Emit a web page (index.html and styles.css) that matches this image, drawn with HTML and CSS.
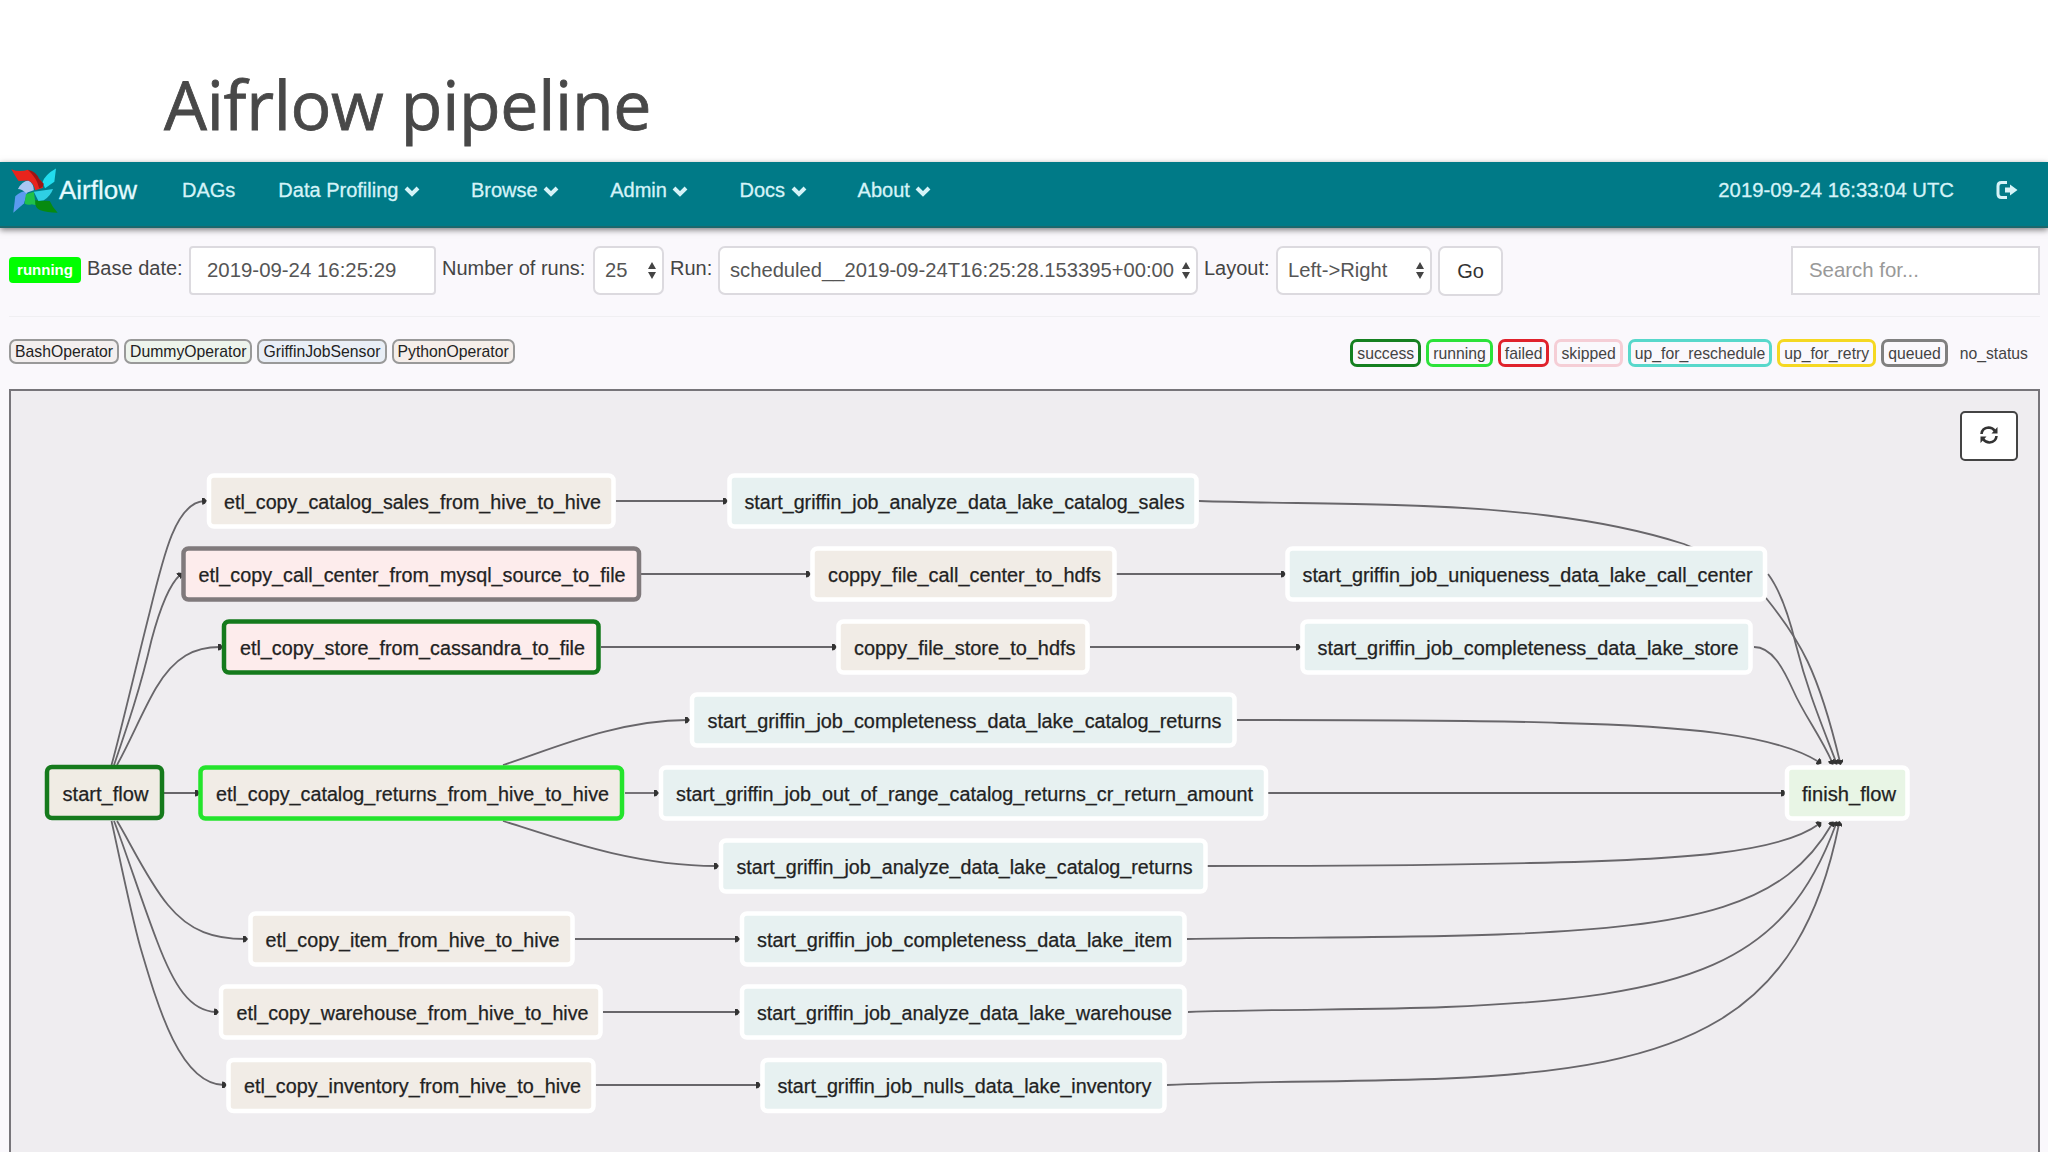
FILE: index.html
```html
<!DOCTYPE html>
<html lang="en">
<head>
    <meta charset="UTF-8">
    <title>Airflow pipeline</title>
    <link rel="stylesheet" href="styles.css">
</head>
<body>
    <h1 class="title">Aifrlow pipeline</h1>

    <nav class="navbar">
        <a class="brand">
            <svg class="logo" viewBox="18 20 145 150">
                <path fill="#5b9bf0" d="M28 158L34 108Q50 92 72 92L60 130Z"/>
                <path fill="#a9c6f2" d="M42 86Q54 62 74 60Q90 70 90 90L66 98Q54 86 42 86Z"/>
                <path fill="#1fc04a" d="M66 102L90 94L94 122L118 122Q104 140 84 132Q72 136 62 130Z"/>
                <path fill="#078a10" d="M94 120L138 122Q146 140 162 158Q130 156 110 150Q92 144 94 120Z"/>
                <path fill="#22dcee" d="M157 24L152 64L124 84L116 66Q124 42 157 24Z"/>
                <path fill="#2fcfe4" d="M90 94L148 86Q140 108 120 120L104 122Z"/>
                <path fill="#e8241c" d="M22 26Q46 36 72 28Q96 42 112 62L118 82L94 90Q90 66 72 60L44 62Q36 50 22 26Z"/>
                <path fill="#a01414" d="M72 28Q98 34 106 56L120 70Q118 82 106 84Q100 54 72 28Z"/>
            </svg>
            <span>Airflow</span>
        </a>
        <a class="nav-item">DAGs</a>
        <a class="nav-item">Data Profiling <svg class="chevron" viewBox="0 0 16 11"><path d="M2 2l6 6 6-6"/></svg></a>
        <a class="nav-item">Browse <svg class="chevron" viewBox="0 0 16 11"><path d="M2 2l6 6 6-6"/></svg></a>
        <a class="nav-item">Admin <svg class="chevron" viewBox="0 0 16 11"><path d="M2 2l6 6 6-6"/></svg></a>
        <a class="nav-item">Docs <svg class="chevron" viewBox="0 0 16 11"><path d="M2 2l6 6 6-6"/></svg></a>
        <a class="nav-item">About <svg class="chevron" viewBox="0 0 16 11"><path d="M2 2l6 6 6-6"/></svg></a>
        <span class="clock">2019-09-24 16:33:04 UTC</span>
        <svg class="logout" viewBox="0 0 22 18"><path class="door" d="M11 1.5H5.5Q2 1.5 2 5v8q0 3.5 3.5 3.5H11"/><path class="arrow" d="M9 6.5h5v-3l7.5 5.5-7.5 5.5v-3H9z"/></svg>
    </nav>

    <form class="toolbar">
        <span class="state">running</span>
        <label>Base date:</label>
        <input class="control" type="text" value="2019-09-24 16:25:29">
        <label>Number of runs:</label>
        <span class="control select">25 <svg viewBox="0 0 8 17"><path d="M0 7l4-7 4 7zM0 10l4 7 4-7z"/></svg></span>
        <label>Run:</label>
        <span class="control select">scheduled__2019-09-24T16:25:28.153395+00:00 <svg viewBox="0 0 8 17"><path d="M0 7l4-7 4 7zM0 10l4 7 4-7z"/></svg></span>
        <label>Layout:</label>
        <span class="control select">Left-&gt;Right <svg viewBox="0 0 8 17"><path d="M0 7l4-7 4 7zM0 10l4 7 4-7z"/></svg></span>
        <button class="go" type="button">Go</button>
        <input class="control search" type="text" placeholder="Search for...">
    </form>

    <div class="legend">
        <span class="operator bash">BashOperator</span>
        <span class="operator dummy">DummyOperator</span>
        <span class="operator sensor">GriffinJobSensor</span>
        <span class="operator python">PythonOperator</span>
        <span class="status success">success</span>
        <span class="status running">running</span>
        <span class="status failed">failed</span>
        <span class="status skipped">skipped</span>
        <span class="status reschedule">up_for_reschedule</span>
        <span class="status retry">up_for_retry</span>
        <span class="status queued">queued</span>
        <span class="status none">no_status</span>
    </div>

    <div class="graph">
        <svg class="dag" viewBox="11 391 2027 760">
            <defs>
                <marker id="arrow" viewBox="0 0 5 7" refX="2" refY="3.5" markerWidth="5" markerHeight="7" markerUnits="userSpaceOnUse" orient="auto">
                    <path d="M0 0L2.5 0.5L5 3.5L2.5 6.5L0 7z"/>
                </marker>
            </defs>
            <g class="edges">
                <path d="M111.5 765C120 735 138 658 149.5 613C164 553 176 503 204 501"/>
                <path d="M114 765C126 730 140 690 151.5 640C160 608 170 584 180 575"/>
                <path d="M117 765C131 740 142 712 156 688C175 656 195 647 220 647"/>
                <path d="M164 793H197"/>
                <path d="M117 821C130 842 148 881 168 905C190 932 215 939 245 939"/>
                <path d="M114 821C124 846 143 905 157 941C174 986 190 1011 216 1012"/>
                <path d="M111.5 821C118 850 131 914 140 946C158 1007 180 1084 224 1085"/>
                <path d="M616 501H725"/>
                <path d="M641 574H808"/>
                <path d="M601 647H834"/>
                <path d="M503 765C545 752 615 720 687 720"/>
                <path d="M625 793H656"/>
                <path d="M503 821C552 836 630 866 716 866"/>
                <path d="M575 939H737"/>
                <path d="M603 1012H737"/>
                <path d="M596 1085H758"/>
                <path d="M1116 574H1283"/>
                <path d="M1090 647H1298"/>
                <path d="M1199 501C1260 503 1330 503 1395 505C1500 508 1600 517 1684 544C1730 562 1752 577 1766 598C1800 640 1818 670 1840 762"/>
                <path d="M1768 574C1780 590 1790 620 1796 645C1808 692 1820 720 1836 762"/>
                <path d="M1754 647C1772 647 1783 668 1793 690C1804 715 1820 735 1832 762"/>
                <path d="M1237 720C1340 720 1480 720 1560 723C1680 726 1775 734 1819 762"/>
                <path d="M1268 793H1783"/>
                <path d="M1207 866C1310 866 1450 865 1530 863C1680 860 1780 853 1819 824"/>
                <path d="M1187 939C1300 937 1400 938 1498 934.5C1700 927 1785 905 1832 824"/>
                <path d="M1188 1012C1280 1009 1370 1010 1446 1007C1690 997 1785 965 1836 824"/>
                <path d="M1167 1085C1260 1081 1360 1082 1446 1078.5C1690 1068 1800 1018 1839 824"/>
            </g>
            <g class="nodes">
                <g class="node dummy success"><rect x="47" y="767" width="115" height="51" rx="5"/><text x="62.5" y="800.5" textLength="86" lengthAdjust="spacingAndGlyphs">start_flow</text></g>

                <g class="node python"><rect x="209" y="475.5" width="404.5" height="51" rx="5"/><text x="224" y="508.5" textLength="377" lengthAdjust="spacingAndGlyphs">etl_copy_catalog_sales_from_hive_to_hive</text></g>
                <g class="node bash queued"><rect x="183.5" y="548.5" width="455.5" height="51" rx="5"/><text x="198.5" y="581.5" textLength="427" lengthAdjust="spacingAndGlyphs">etl_copy_call_center_from_mysql_source_to_file</text></g>
                <g class="node bash success"><rect x="224" y="621.5" width="374.5" height="51" rx="5"/><text x="240" y="654.5" textLength="345" lengthAdjust="spacingAndGlyphs">etl_copy_store_from_cassandra_to_file</text></g>
                <g class="node python running"><rect x="200.5" y="767.5" width="421.5" height="51" rx="5"/><text x="216" y="800.5" textLength="393" lengthAdjust="spacingAndGlyphs">etl_copy_catalog_returns_from_hive_to_hive</text></g>
                <g class="node python"><rect x="250.5" y="913.5" width="322" height="51" rx="5"/><text x="265.5" y="946.5" textLength="294" lengthAdjust="spacingAndGlyphs">etl_copy_item_from_hive_to_hive</text></g>
                <g class="node python"><rect x="221" y="986.5" width="379.5" height="51" rx="5"/><text x="236.5" y="1019.5" textLength="352" lengthAdjust="spacingAndGlyphs">etl_copy_warehouse_from_hive_to_hive</text></g>
                <g class="node python"><rect x="228.5" y="1060" width="365" height="51" rx="5"/><text x="244" y="1093" textLength="337" lengthAdjust="spacingAndGlyphs">etl_copy_inventory_from_hive_to_hive</text></g>

                <g class="node sensor"><rect x="729.5" y="475.5" width="467" height="51" rx="5"/><text x="744.5" y="508.5" textLength="440" lengthAdjust="spacingAndGlyphs">start_griffin_job_analyze_data_lake_catalog_sales</text></g>
                <g class="node python"><rect x="812.5" y="548.5" width="302" height="51" rx="5"/><text x="828" y="581.5" textLength="273" lengthAdjust="spacingAndGlyphs">coppy_file_call_center_to_hdfs</text></g>
                <g class="node python"><rect x="838.5" y="621.5" width="249" height="51" rx="5"/><text x="854" y="654.5" textLength="221.5" lengthAdjust="spacingAndGlyphs">coppy_file_store_to_hdfs</text></g>
                <g class="node sensor"><rect x="692" y="694.5" width="542.5" height="51" rx="5"/><text x="707.5" y="727.5" textLength="514" lengthAdjust="spacingAndGlyphs">start_griffin_job_completeness_data_lake_catalog_returns</text></g>
                <g class="node sensor"><rect x="661" y="767.5" width="605" height="51" rx="5"/><text x="676" y="800.5" textLength="577" lengthAdjust="spacingAndGlyphs">start_griffin_job_out_of_range_catalog_returns_cr_return_amount</text></g>
                <g class="node sensor"><rect x="721" y="840.5" width="484.5" height="51" rx="5"/><text x="736.5" y="873.5" textLength="456" lengthAdjust="spacingAndGlyphs">start_griffin_job_analyze_data_lake_catalog_returns</text></g>
                <g class="node sensor"><rect x="742" y="913.5" width="442.5" height="51" rx="5"/><text x="757" y="946.5" textLength="415" lengthAdjust="spacingAndGlyphs">start_griffin_job_completeness_data_lake_item</text></g>
                <g class="node sensor"><rect x="742" y="986.5" width="442.5" height="51" rx="5"/><text x="757" y="1019.5" textLength="415" lengthAdjust="spacingAndGlyphs">start_griffin_job_analyze_data_lake_warehouse</text></g>
                <g class="node sensor"><rect x="762.5" y="1060" width="402" height="51" rx="5"/><text x="777.5" y="1093" textLength="374" lengthAdjust="spacingAndGlyphs">start_griffin_job_nulls_data_lake_inventory</text></g>

                <g class="node sensor"><rect x="1287.5" y="548.5" width="477.5" height="51" rx="5"/><text x="1302.5" y="581.5" textLength="450" lengthAdjust="spacingAndGlyphs">start_griffin_job_uniqueness_data_lake_call_center</text></g>
                <g class="node sensor"><rect x="1302.5" y="621.5" width="448" height="51" rx="5"/><text x="1317.5" y="654.5" textLength="421" lengthAdjust="spacingAndGlyphs">start_griffin_job_completeness_data_lake_store</text></g>
                <g class="node dummy"><rect x="1787" y="767.5" width="120.5" height="51" rx="5"/><text x="1802" y="800.5" textLength="94" lengthAdjust="spacingAndGlyphs">finish_flow</text></g>
            </g>
        </svg>
        <button class="refresh" type="button">
            <svg viewBox="0 0 20 20"><path class="arc" d="M2.5 9Q3 3 9.5 2.5Q13.5 2.5 16 6M17.5 11Q17 17 10.5 17.5Q6.5 17.5 4 14"/><path d="M18.5 2v6.5h-6zM1.5 18v-6.5h6z"/></svg>
        </button>
    </div>
</body>
</html>
```

FILE: styles.css
```css
* {
    box-sizing: border-box;
}
body {
    margin: 0;
    height: 1152px;
    overflow: hidden;
    display: flex;
    flex-direction: column;
    background-color: #faf8fc;
    font-family: "Liberation Sans", Arial, sans-serif;
    font-size: 20px;
    color: #444;
}
.title {
    margin: 0;
    height: 162px;
    flex: none;
    padding: 58px 0 0 164px;
    background-color: #fff;
    color: #484848;
    font-family: "Trebuchet MS", "Open Sans", sans-serif;
    font-size: 68px;
    font-weight: 400;
    letter-spacing: -0.3px;
    line-height: 91px;
    white-space: nowrap;
    -webkit-text-stroke: 0.8px #484848;
}

/* navbar */
.navbar {
    height: 66px;
    flex: none;
    display: flex;
    align-items: flex-start;
    padding: 0 30px 0 10px;
    background-color: #007a87;
    border-bottom: 2px solid #1c686d;
    box-shadow: 0 2px 6px rgba(0, 0, 0, 0.5);
    color: #d5f3f8;
    line-height: 56px;
    white-space: nowrap;
    -webkit-text-stroke: 0.3px #d5f3f8;
}
.brand {
    display: flex;
    width: 172px;
    color: #e8fbff;
    font-size: 26px;
}
.logo {
    width: 48px;
    height: 50px;
    margin-top: 5px;
    margin-right: 1px;
}
.nav-item {
    margin-right: 51px;
}
.brand + .nav-item {
    margin-right: 43px;
}
.chevron {
    width: 16px;
    height: 11px;
    fill: none;
    stroke: #d5f3f8;
    stroke-width: 4;
}
.clock {
    margin-left: auto;
    font-size: 20.3px;
}
.logout {
    width: 22px;
    height: 18px;
    margin: 19px 0 0 42px;
}
.logout .door {
    fill: none;
    stroke: #d5f3f8;
    stroke-width: 3;
}
.logout .arrow {
    fill: #d5f3f8;
}

/* filters above the graph */
.toolbar {
    height: 89px;
    flex: none;
    display: grid;
    grid-template-columns: 78px 102px 247px 157px 71px 54px 480px 78px 156px 72px 1fr;
    margin: 0 8px 0 9px;
    padding-top: 18px;
    border-bottom: 1px solid #f0eff2;
    white-space: nowrap;
}
.toolbar label {
    line-height: 44px;
}
.toolbar label:not(:nth-child(2)) {
    padding-left: 6px;
}
.state {
    width: 72px;
    height: 26px;
    margin-top: 11px;
    border-radius: 4px;
    background-color: #00ff00;
    color: #fff;
    font-size: 15px;
    font-weight: bold;
    line-height: 25px;
    text-align: center;
}
.control {
    height: 49px;
    width: 100%;
    border: 2px solid #dcdadf;
    border-radius: 4px;
    background-color: #fff;
    color: #555;
    font-family: inherit;
    font-size: 20px;
    line-height: 45px;
}
input.control {
    padding: 0 16px;
    font-size: 20.4px;
}
.select {
    display: flex;
    align-items: center;
    justify-content: space-between;
    padding: 0 6px 0 10px;
    border-radius: 7px;
    font-size: 20.2px;
}
.select svg {
    width: 8px;
    height: 17px;
    fill: #444;
}
.go {
    width: 65px;
    height: 50px;
    margin-left: 6px;
    padding: 0;
    border: 2px solid #dcdadf;
    border-radius: 7px;
    background-color: #fff;
    color: #333;
    font-family: inherit;
    font-size: 20px;
}
.search {
    width: 249px;
    justify-self: end;
    border-radius: 0;
}
.search::placeholder {
    color: #999;
    opacity: 1;
}

/* legend */
.legend {
    height: 72px;
    flex: none;
    display: flex;
    align-items: flex-start;
    gap: 5px;
    padding: 22px 13px 0 9px;
    color: #222;
    font-size: 15.75px;
    white-space: nowrap;
}
.operator {
    height: 25px;
    padding: 0 4px;
    border: 2px solid #999;
    border-radius: 7px;
    line-height: 21px;
}
.bash {
    background-color: #f3efef;
}
.dummy {
    background-color: #edf4ec;
}
.sensor {
    background-color: #e9eef6;
}
.python {
    background-color: #f5eeea;
}
.status {
    height: 28px;
    padding: 0 4px;
    border: 3px solid #fff;
    border-radius: 7px;
    line-height: 23px;
    color: #444;
}
.status.success {
    margin-left: auto;
    border-color: #158020;
}
.status.running {
    border-color: #2ce23a;
}
.status.failed {
    border-color: #e0222c;
}
.status.skipped {
    border-color: #f5ced6;
}
.status.reschedule {
    border-color: #58d8cb;
}
.status.retry {
    border-color: #f5d822;
}
.status.queued {
    border-color: #808080;
}
.status.none {
    border-color: transparent;
}

/* graph */
.graph {
    position: relative;
    flex: 1;
    margin: 0 8px 0 9px;
    border: 2px solid #77757a;
    border-bottom: none;
    background-color: #efedf0;
}
.dag {
    display: block;
    width: 2027px;
    height: 760px;
}
.edges path {
    fill: none;
    stroke: #68666a;
    stroke-width: 1.8;
    marker-end: url(#arrow);
}
#arrow path {
    fill: #333;
}
.node rect {
    stroke: #fff;
    stroke-width: 4.5;
}
.node text {
    font-size: 19.5px;
    fill: #222;
    stroke: #222;
    stroke-width: 0.25;
}
.node.python rect {
    fill: #f1ece6;
}
.node.sensor rect {
    fill: #e7f1f1;
}
.node.bash rect {
    fill: #fdecec;
}
.node.dummy rect {
    fill: #e8f5e5;
}
.node.dummy.success rect {
    fill: #f0ece4;
}
.node.success rect {
    stroke: #157a1c;
}
.node.running rect {
    stroke: #24e42c;
}
.node.queued rect {
    stroke: #807a7c;
}
.refresh {
    position: absolute;
    top: 20px;
    right: 20px;
    width: 58px;
    height: 50px;
    padding: 0;
    border: 2px solid #444;
    border-radius: 5px;
    background-color: #fff;
}
.refresh svg {
    width: 20px;
    height: 20px;
    fill: #333;
}
.refresh .arc {
    fill: none;
    stroke: #333;
    stroke-width: 2.6;
}
```
